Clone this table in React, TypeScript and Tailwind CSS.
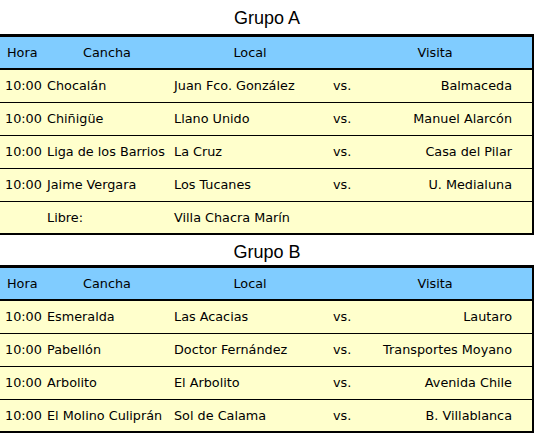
const grupos = [
  {
    name: "Grupo A",
    matches: [
      { hora: "10:00", cancha: "Chocalán", local: "Juan Fco. González", visita: "Balmaceda" },
      { hora: "10:00", cancha: "Chiñigüe", local: "Llano Unido", visita: "Manuel Alarcón" },
      { hora: "10:00", cancha: "Liga de los Barrios", local: "La Cruz", visita: "Casa del Pilar" },
      { hora: "10:00", cancha: "Jaime Vergara", local: "Los Tucanes", visita: "U. Medialuna" },
    ],
    libre: "Villa Chacra Marín",
  },
  {
    name: "Grupo B",
    matches: [
      { hora: "10:00", cancha: "Esmeralda", local: "Las Acacias", visita: "Lautaro" },
      { hora: "10:00", cancha: "Pabellón", local: "Doctor Fernández", visita: "Transportes Moyano" },
      { hora: "10:00", cancha: "Arbolito", local: "El Arbolito", visita: "Avenida Chile" },
      { hora: "10:00", cancha: "El Molino Culiprán", local: "Sol de Calama", visita: "B. Villablanca" },
    ],
    libre: null as string | null,
  },
];

const cell = "text-[12.8px] text-black";

const App = () => {
  return (
    <div className="w-[534px] bg-white font-['DejaVu_Sans',sans-serif]">
      {grupos.map((g, gi) => {
        const rows = g.libre ? g.matches.length + 1 : g.matches.length;
        return (
          <div key={g.name}>
            <div
              className={`flex justify-center items-center font-['Liberation_Sans',Arial,sans-serif] text-[18px] text-black ${
                gi === 0 ? "h-[34px] pt-[2px]" : "h-[30px] pt-[4px]"
              }`}
            >
              {g.name}
            </div>
            <div className="border-t-[3px] border-r-2 border-b-2 border-black">
              <div className={`flex h-[33px] items-center border-b-2 border-black bg-[#80ccff] ${cell}`}>
                <div className="w-[62px] pl-[7px]">Hora</div>
                <div className="w-[90px] text-center">Cancha</div>
                <div className="w-[196px] text-center">Local</div>
                <div className="flex-1 pr-[10px] text-center">Visita</div>
              </div>
              {g.matches.map((m, i) => (
                <div
                  key={m.cancha}
                  className={`flex items-center bg-[#ffffcc] ${cell} ${
                    i === rows - 1 ? "h-[31px]" : "h-[33px] border-b border-black"
                  }`}
                >
                  <div className="w-[47px] pl-[5px]">{m.hora}</div>
                  <div className="w-[127px] whitespace-nowrap">{m.cancha}</div>
                  <div className="w-[159px] whitespace-nowrap">{m.local}</div>
                  <div className="w-[40px]">vs.</div>
                  <div className="flex-1 pr-[20px] text-right whitespace-nowrap">{m.visita}</div>
                </div>
              ))}
              {g.libre && (
                <div className={`flex h-[31px] items-center bg-[#ffffcc] ${cell}`}>
                  <div className="w-[47px]" />
                  <div className="w-[127px]">Libre:</div>
                  <div>{g.libre}</div>
                </div>
              )}
            </div>
          </div>
        );
      })}
    </div>
  );
};

export default App;
